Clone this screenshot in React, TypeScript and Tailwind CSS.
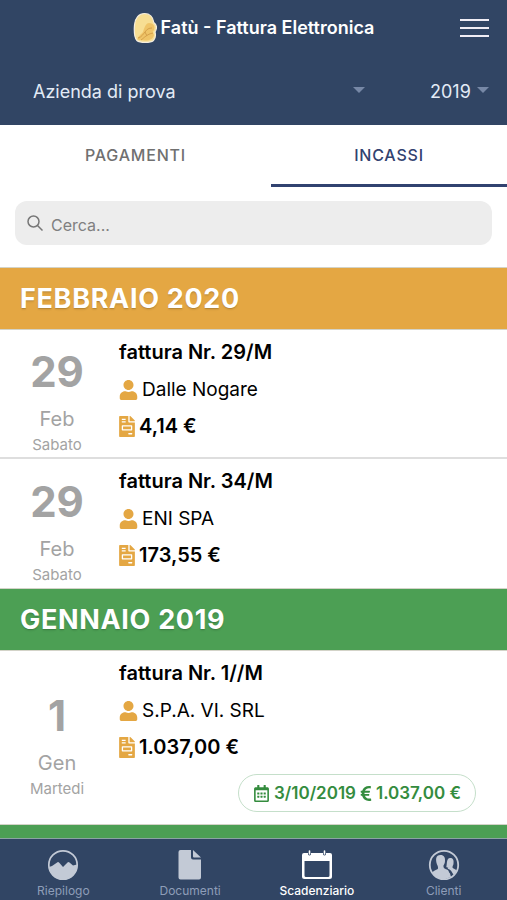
import React, { FC, useState } from 'react'
import { FaEuroSign, FaFileInvoice, FaRegCalendarAlt, FaUser } from 'react-icons/fa'

type Pagamento = { data: string, importo: string }

type Fattura = {
  id: number
  giorno: string
  mese: string
  giornoSettimana: string
  titolo: string
  cliente: string
  importo: string
  pagamento?: Pagamento
}

type Gruppo = { id: number, titolo: string, colore: string, fatture: Fattura[] }

const gruppi: Gruppo[] = [
  {
    id: 1,
    titolo: 'FEBBRAIO 2020',
    colore: 'bg-[#e4a743]',
    fatture: [
      { id: 1, giorno: '29', mese: 'Feb', giornoSettimana: 'Sabato', titolo: 'fattura Nr. 29/M', cliente: 'Dalle Nogare', importo: '4,14 €' },
      { id: 2, giorno: '29', mese: 'Feb', giornoSettimana: 'Sabato', titolo: 'fattura Nr. 34/M', cliente: 'ENI SPA', importo: '173,55 €' },
    ],
  },
  {
    id: 2,
    titolo: 'GENNAIO 2019',
    colore: 'bg-[#4c9f54]',
    fatture: [
      {
        id: 3, giorno: '1', mese: 'Gen', giornoSettimana: 'Martedi', titolo: 'fattura Nr. 1//M', cliente: 'S.P.A. VI. SRL', importo: '1.037,00 €',
        pagamento: { data: '3/10/2019', importo: '1.037,00 €' },
      },
    ],
  },
  { id: 3, titolo: '', colore: 'bg-[#4c9f54]', fatture: [] },
]

const Logo: FC = () => (
  <svg viewBox="0 0 24 32" className="h-8 w-6 shrink-0" aria-hidden="true">
    <path d="M11.500 1.500C17 1.500 20 5 20.800 10.500C24 13 23.800 17 22 20C23 24 22 27 20.500 28.500C17.500 31 7 31 3.800 28.500C1 25 1 19 1.500 13C2 6 6 1.500 11.500 1.500Z" fill="#f7de93" stroke="#f5eedf" strokeWidth="1.200" />
    <path d="M16 11C20 11 22.500 14 21 18L19.500 20L21 23C20 27 17 28.500 12 28.500L4.500 27.500C5 24 8 22.500 10 20C11 16 13 11 16 11Z" fill="#efc468" />
    <path d="M5 26C9 25 10 22 12 20C14 17 16 16 19 16M8 28C11 26 14 22 20 21M12 20L14 24" fill="none" stroke="#d5a04a" strokeWidth="1" />
  </svg>
)

const Freccia: FC = () => (
  <svg viewBox="0 0 12 6" className="pointer-events-none -mt-1 h-1.5 w-3 shrink-0 fill-[#7788a6]" aria-hidden="true">
    <path d="M0 0H12L6 6Z" />
  </svg>
)

const IconaRiepilogo: FC = () => (
  <svg viewBox="0 0 32 32" className="size-8" aria-hidden="true">
    <circle cx="16" cy="16" r="14.200" fill="none" stroke="currentColor" strokeWidth="1.700" />
    <path d="M2 18L5 17L10.500 13.200Q11.500 12.800 12.500 14L16 18L20.500 13.500Q21.500 12.500 22.500 13.500L26 16.500L30 15.500A14 14 0 0 1 2 18Z" fill="currentColor" />
  </svg>
)

const IconaDocumenti: FC = () => (
  <svg viewBox="0 0 32 32" className="size-8" aria-hidden="true">
    <path d="M6.500 1H17V8.500Q17 10.500 19 10.500H27V28.500Q27 30.500 25 30.500H6.500Q4.500 30.500 4.500 28.500V3Q4.500 1 6.500 1Z" fill="currentColor" />
    <path d="M19 1L27 8.500H20Q19 8.500 19 7.500Z" fill="currentColor" />
  </svg>
)

const IconaScadenziario: FC = () => (
  <svg viewBox="0 0 32 32" className="size-8" aria-hidden="true">
    <path fillRule="evenodd" d="M3 4H7V5.500Q8.500 7.500 10 5.500V4H22V5.500Q23.500 7.500 25 5.500V4H29Q31 4 31 6V27.500Q31 30 28.500 30H3.500Q1 30 1 27.500V6Q1 4 3 4ZM3.500 12V26.500Q3.500 28 5 28H27Q28.500 28 28.500 26.500V12Z" fill="currentColor" />
    <path d="M8.500 2V5M23.500 2V5" stroke="currentColor" strokeWidth="1.600" strokeLinecap="round" />
  </svg>
)

const IconaClienti: FC = () => (
  <svg viewBox="0 0 32 32" className="size-8" aria-hidden="true">
    <circle cx="16" cy="16" r="14.200" fill="none" stroke="currentColor" strokeWidth="1.800" />
    <path d="M12.500 6C16 6 17.300 8.500 17 12C17 14 16 15.500 15.500 16.500C15.300 19 16 19.500 19 20.500C21 21.500 20.500 23 22 24.500L23 28L16 30.500Q8 30 4.500 24C5 21 9.500 21 10 19.500C10.300 18 9.500 16.500 9 15.500C7.500 11 7.500 6 12.500 6Z" fill="currentColor" />
    <path d="M22 9C25 9 26 11 25.500 14.500C25.500 16 24.700 16.700 24.500 18C24.300 20 28 19.500 28.500 22L26 26C24.500 25 24 22 21.500 20.500C19.500 19.500 19.300 19.500 20.300 18.500C18.500 18.500 18 18 18.500 17C19 15 18.500 9 22 9Z" fill="currentColor" />
  </svg>
)

const voci = [
  { id: 'riepilogo', etichetta: 'Riepilogo', Icona: IconaRiepilogo },
  { id: 'documenti', etichetta: 'Documenti', Icona: IconaDocumenti },
  { id: 'scadenziario', etichetta: 'Scadenziario', Icona: IconaScadenziario },
  { id: 'clienti', etichetta: 'Clienti', Icona: IconaClienti },
]

const RigaFattura: FC<{ fattura: Fattura }> = ({ fattura }) => (
  <li className="flex min-h-[129px] items-stretch border-b-2 border-[#dedede] last:border-b-0">
    <div className="flex w-[114px] shrink-0 flex-col items-center justify-center pt-2 text-[#a3a3a3]">
      <span className="text-[42px] leading-[58px] font-bold">{fattura.giorno}</span>
      <span className="text-xl leading-9">{fattura.mese}</span>
      <span className="text-[15px] leading-4">{fattura.giornoSettimana}</span>
    </div>
    <div className="min-w-0 flex-1 pt-1 pr-[31px] pl-[5px] text-xl leading-[37px] text-black">
      <h3 className="font-semibold">{fattura.titolo}</h3>
      <p className="flex items-center gap-1 text-[19px]">
        <FaUser className="size-5 w-[19px] text-[#e4a743]" />
        {fattura.cliente}
      </p>
      <p className="flex items-center gap-1 font-semibold">
        <FaFileInvoice className="h-[21px] w-4 text-[#e4a743]" />
        {fattura.importo}
      </p>
      {fattura.pagamento && (
        <div className="flex justify-end pt-2 pb-3">
          <span className="flex h-[38px] items-center gap-1 rounded-full border border-[#c5dfca] px-3.5 text-[17px] font-semibold whitespace-nowrap text-[#348c3e]">
            <FaRegCalendarAlt />
            {fattura.pagamento.data}
            <FaEuroSign className="w-3" />
            {fattura.pagamento.importo}
          </span>
        </div>
      )}
    </div>
  </li>
)

export default function App() {
  const [scheda, setScheda] = useState('incassi')
  const [voce, setVoce] = useState('scadenziario')

  return (
    <div className="flex h-screen flex-col overflow-hidden bg-white font-['Inter','Liberation_Sans',sans-serif]">
      <header className="h-[125px] shrink-0 bg-[#314564] text-white">
        <div className="grid h-14 grid-cols-[48px_1fr_48px] items-center">
          <h1 className="col-start-2 flex items-center justify-center gap-1 text-lg font-semibold whitespace-nowrap">
            <Logo />
            Fatù - Fattura Elettronica
          </h1>
          <button type="button" aria-label="Menu" className="ml-px flex h-10 w-[29px] flex-col justify-center gap-1.5">
            <span className="h-0.5 w-full bg-[#f0edf5]" />
            <span className="h-0.5 w-full bg-[#f0edf5]" />
            <span className="h-0.5 w-full bg-[#f0edf5]" />
          </button>
        </div>
        <div className="flex h-[69px] items-center justify-between pt-0.5 pr-[18px] pl-[33px] text-lg text-[#e3ebf6]">
          <div className="flex w-[332px] items-center">
            <select aria-label="Azienda" className="min-w-0 flex-1 appearance-none bg-transparent outline-none">
              <option>Azienda di prova</option>
            </select>
            <Freccia />
          </div>
          <div className="flex items-center gap-1.5">
            <select aria-label="Anno" className="appearance-none bg-transparent outline-none">
              <option>2019</option>
            </select>
            <Freccia />
          </div>
        </div>
      </header>

      <div role="tablist" className="grid h-[62px] shrink-0 grid-cols-[271fr_236fr] text-base font-medium tracking-wider">
        <button
          type="button"
          role="tab"
          aria-selected={scheda === 'pagamenti'}
          onClick={() => setScheda('pagamenti')}
          className={scheda === 'pagamenti' ? 'border-b-3 border-[#314270] text-[#314270]' : 'border-b-3 border-transparent text-[#707070]'}
        >
          PAGAMENTI
        </button>
        <button
          type="button"
          role="tab"
          aria-selected={scheda === 'incassi'}
          onClick={() => setScheda('incassi')}
          className={scheda === 'incassi' ? 'border-b-3 border-[#314270] text-[#314270]' : 'border-b-3 border-transparent text-[#707070]'}
        >
          INCASSI
        </button>
      </div>

      <div className="shrink-0 px-[15px] pt-3.5 pb-[22px]">
        <label className="flex h-11 items-center gap-2 rounded-xl bg-[#ededed] px-3">
          <svg viewBox="0 0 16 16" className="size-4 shrink-0 stroke-[#777]" fill="none" strokeWidth="1.500" aria-hidden="true">
            <circle cx="6.500" cy="6.500" r="5.500" />
            <path d="M10.500 10.500L15.500 15.500" />
          </svg>
          <input type="text" aria-label="Cerca" placeholder="Cerca..." className="min-w-0 flex-1 bg-transparent pt-1 text-base outline-none placeholder:text-[#808080]" />
        </label>
      </div>

      <main className="min-h-0 flex-1 overflow-hidden">
        {gruppi.map((gruppo) => (
          <section key={gruppo.id}>
            <h2 className={`${gruppo.colore} flex h-[63px] items-center border-y border-[#d3d3c8] px-5 pt-0.5 text-[27px] font-bold tracking-wide text-white text-shadow-sm`}>
              {gruppo.titolo}
            </h2>
            <ul>
              {gruppo.fatture.map((fattura) => (
                <RigaFattura key={fattura.id} fattura={fattura} />
              ))}
            </ul>
          </section>
        ))}
      </main>

      <nav className="grid h-[62px] shrink-0 grid-cols-4 border-t border-[#8ba3a3] bg-[#314564]">
        {voci.map(({ id, etichetta, Icona }) => (
          <button
            key={id}
            type="button"
            onClick={() => setVoce(id)}
            className={`flex flex-col items-center pt-2.5 text-xs ${voce === id ? 'font-medium text-white' : 'text-[#c3cad6]'}`}
          >
            <Icona />
            <span className={voce === id ? 'pt-0.5' : 'pt-0.5 text-[#8e9db8]'}>{etichetta}</span>
          </button>
        ))}
      </nav>
    </div>
  )
}
